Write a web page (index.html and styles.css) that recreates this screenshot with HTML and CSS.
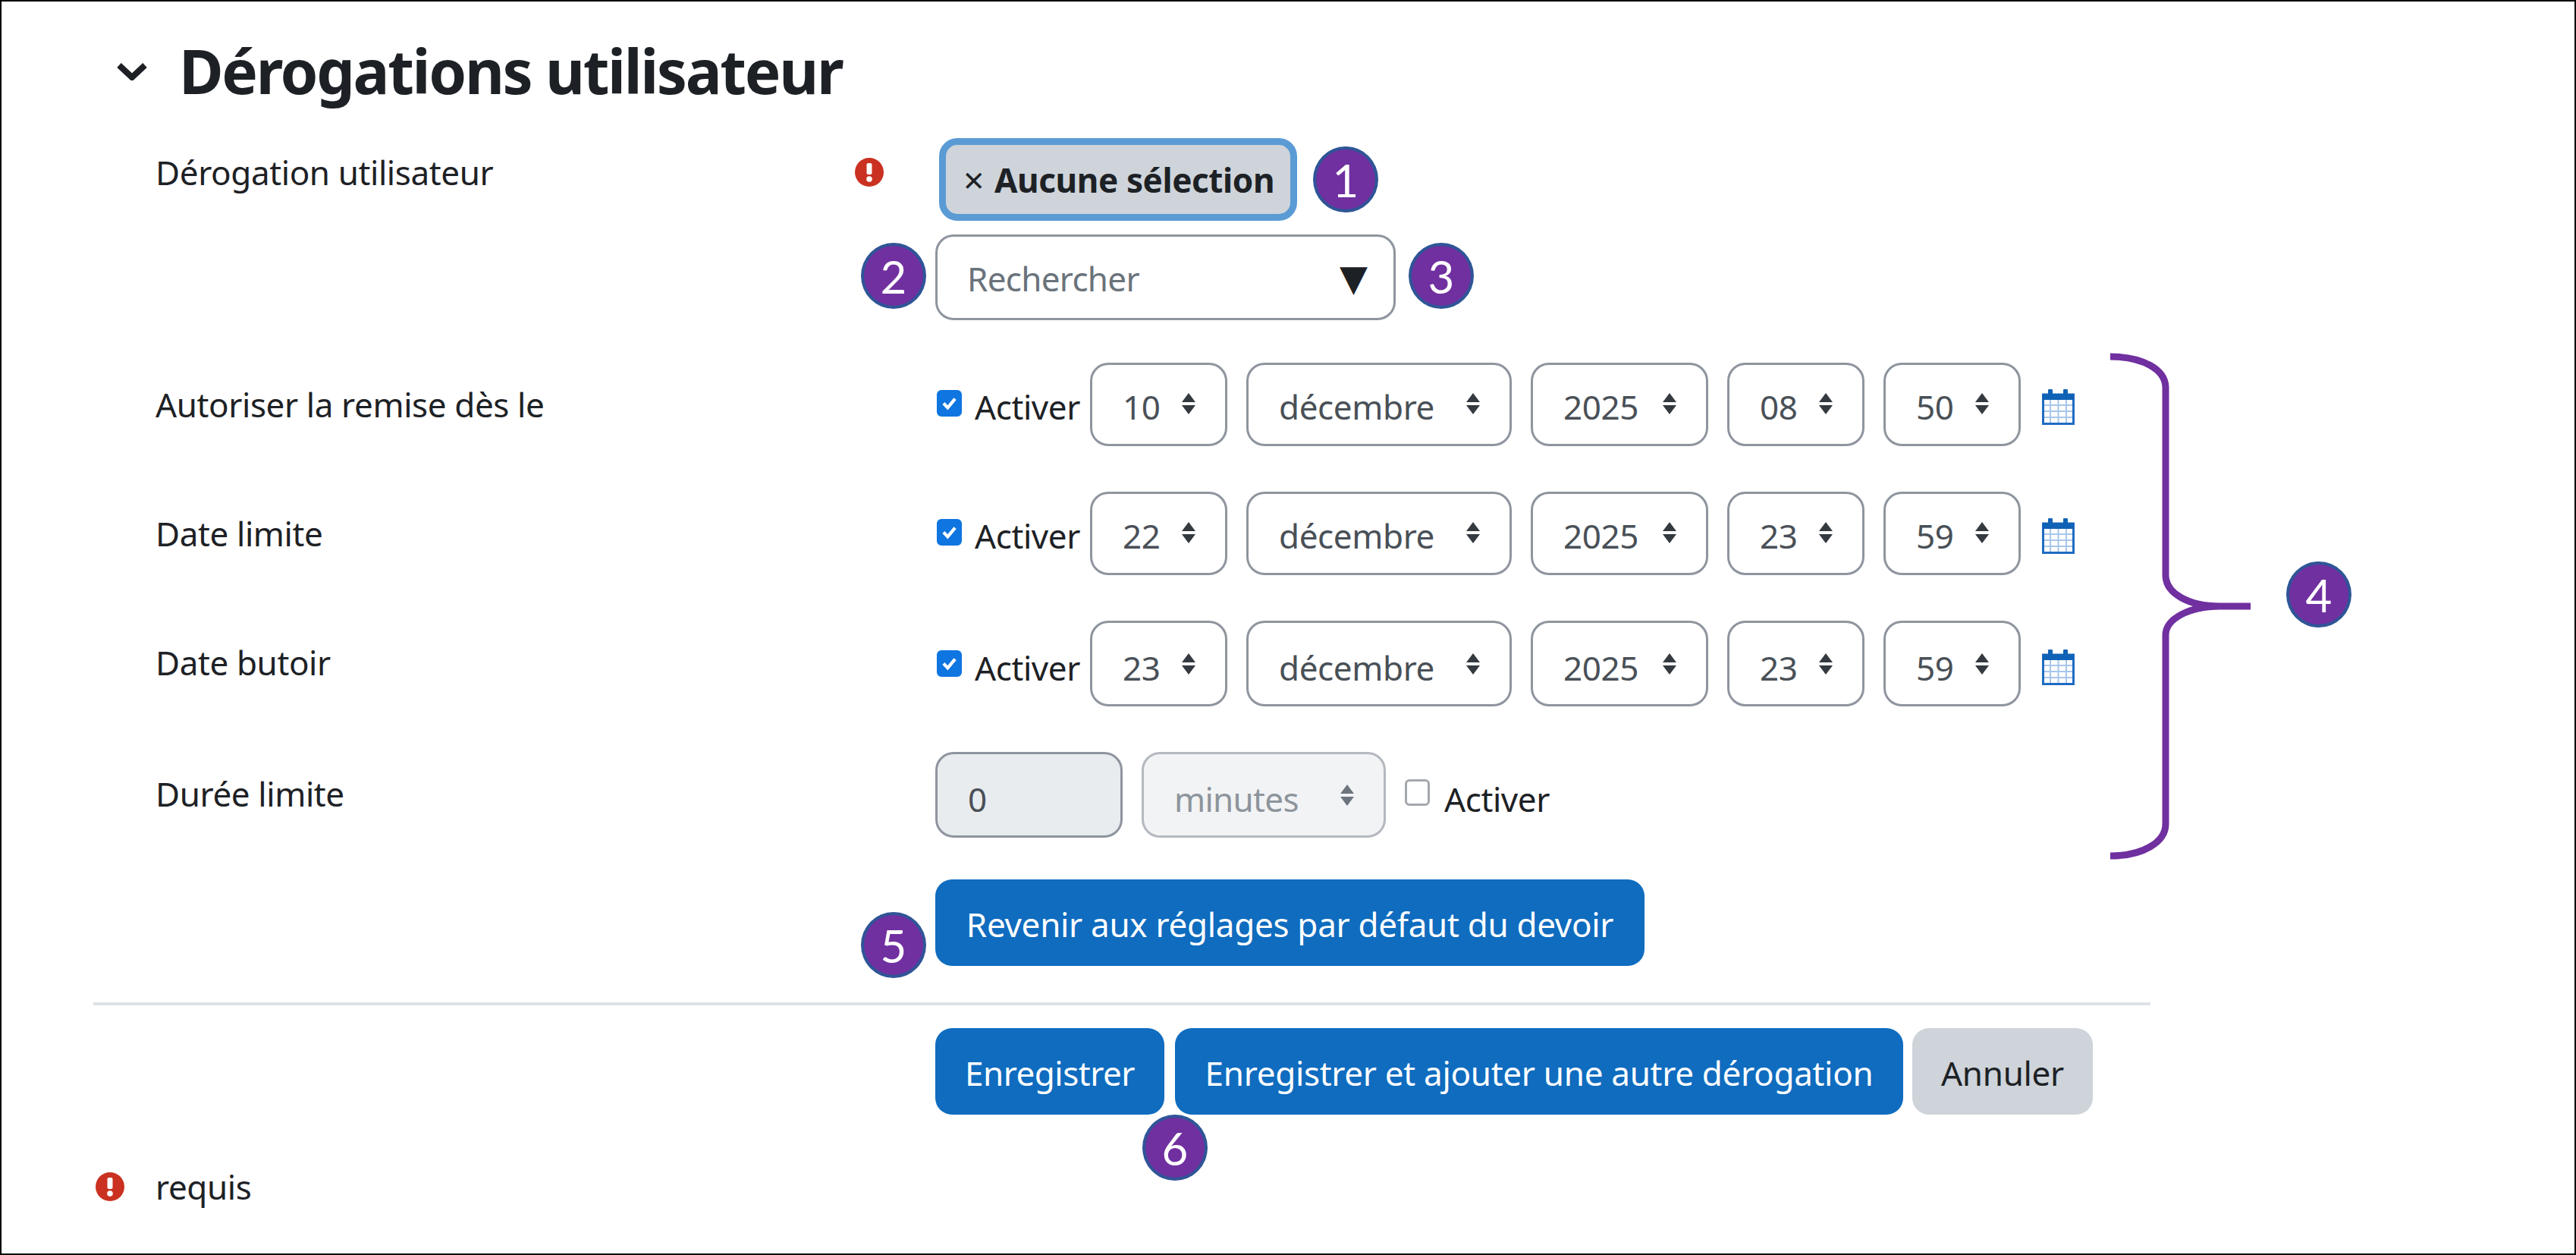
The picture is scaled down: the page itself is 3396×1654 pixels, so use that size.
FILE: index.html
```html
<!DOCTYPE html>
<html lang="fr">
<head>
  <meta charset="UTF-8" />
  <title>Dérogations utilisateur</title>
  <link rel="stylesheet" href="styles.css">
</head>
<body>
  <svg class="icon-defs" width="0" height="0">
    <symbol id="updown" viewBox="0 0 20 28">
      <path d="M10 0 L19 12 H1 Z M10 28 L1 16 H19 Z" />
    </symbol>
    <symbol id="warn" viewBox="0 0 38 38">
      <circle cx="19" cy="19" r="19" fill="#ca3120" />
      <rect x="15.5" y="7" width="7" height="15" rx="2" fill="#fff" />
      <circle cx="19" cy="28" r="3.8" fill="#fff" />
    </symbol>
    <symbol id="calendar" viewBox="0 0 43 47">
      <path d="M1 12 H42 M1 21 H42 M1 29 H42 M1 37 H42 M11 12 V46 M21.500 12 V46 M32 12 V46" stroke="#a8c6ea" stroke-width="2" fill="none" />
      <rect x="1.500" y="7" width="40" height="38.500" fill="none" stroke="#1f6cc2" stroke-width="3" />
      <rect x="1" y="6" width="41" height="8" fill="#0f62b5" />
      <path d="M11 8 V2 M31 8 V2" stroke="#0f62b5" stroke-width="6" stroke-linecap="round" />
    </symbol>
  </svg>

  <div class="frame">
    <div class="section-head">
      <svg class="chevron" viewBox="0 0 42 24"><path d="M4 4 L21 20 L38 4" fill="none" stroke="#1d2125" stroke-width="8" /></svg>
      <h2>Dérogations utilisateur</h2>
    </div>

    <div class="field field-user">
      <div class="label"><span>Dérogation utilisateur</span><svg class="warn"><use href="#warn" /></svg></div>
      <div class="picker">
        <div class="chip"><span class="chip-x">×</span><b>Aucune sélection</b></div>
        <div class="search"><span class="placeholder">Rechercher</span><span class="caret">▼</span></div>
      </div>
    </div>

    <div class="field">
      <div class="label"><span>Autoriser la remise dès le</span></div>
      <div class="controls">
        <span class="check checked"><svg viewBox="0 0 32 34"><path d="M7 17 L13.500 24 L25 10" fill="none" stroke="#fff" stroke-width="5" /></svg></span>
        <span class="check-text">Activer</span>
        <div class="sel sel-small"><span>10</span><svg class="arrows"><use href="#updown" /></svg></div>
        <div class="sel sel-month"><span>décembre</span><svg class="arrows"><use href="#updown" /></svg></div>
        <div class="sel sel-year"><span>2025</span><svg class="arrows"><use href="#updown" /></svg></div>
        <div class="sel sel-small"><span>08</span><svg class="arrows"><use href="#updown" /></svg></div>
        <div class="sel sel-small"><span>50</span><svg class="arrows"><use href="#updown" /></svg></div>
        <svg class="cal"><use href="#calendar" /></svg>
      </div>
    </div>

    <div class="field">
      <div class="label"><span>Date limite</span></div>
      <div class="controls">
        <span class="check checked"><svg viewBox="0 0 32 34"><path d="M7 17 L13.500 24 L25 10" fill="none" stroke="#fff" stroke-width="5" /></svg></span>
        <span class="check-text">Activer</span>
        <div class="sel sel-small"><span>22</span><svg class="arrows"><use href="#updown" /></svg></div>
        <div class="sel sel-month"><span>décembre</span><svg class="arrows"><use href="#updown" /></svg></div>
        <div class="sel sel-year"><span>2025</span><svg class="arrows"><use href="#updown" /></svg></div>
        <div class="sel sel-small"><span>23</span><svg class="arrows"><use href="#updown" /></svg></div>
        <div class="sel sel-small"><span>59</span><svg class="arrows"><use href="#updown" /></svg></div>
        <svg class="cal"><use href="#calendar" /></svg>
      </div>
    </div>

    <div class="field field-tall">
      <div class="label"><span>Date butoir</span></div>
      <div class="controls">
        <span class="check checked"><svg viewBox="0 0 32 34"><path d="M7 17 L13.500 24 L25 10" fill="none" stroke="#fff" stroke-width="5" /></svg></span>
        <span class="check-text">Activer</span>
        <div class="sel sel-small"><span>23</span><svg class="arrows"><use href="#updown" /></svg></div>
        <div class="sel sel-month"><span>décembre</span><svg class="arrows"><use href="#updown" /></svg></div>
        <div class="sel sel-year"><span>2025</span><svg class="arrows"><use href="#updown" /></svg></div>
        <div class="sel sel-small"><span>23</span><svg class="arrows"><use href="#updown" /></svg></div>
        <div class="sel sel-small"><span>59</span><svg class="arrows"><use href="#updown" /></svg></div>
        <svg class="cal"><use href="#calendar" /></svg>
      </div>
    </div>

    <div class="field field-tall field-limit">
      <div class="label"><span>Durée limite</span></div>
      <div class="controls">
        <div class="num-input"><span>0</span></div>
        <div class="sel sel-unit"><span>minutes</span><svg class="arrows"><use href="#updown" /></svg></div>
        <span class="check"></span>
        <span class="check-text">Activer</span>
      </div>
    </div>

    <div class="reset-row">
      <button class="btn btn-reset">Revenir aux réglages par défaut du devoir</button>
    </div>

    <hr class="divider">

    <div class="actions">
      <button class="btn btn-save">Enregistrer</button>
      <button class="btn btn-next">Enregistrer et ajouter une autre dérogation</button>
      <button class="btn btn-cancel">Annuler</button>
    </div>

    <div class="legend"><svg class="warn"><use href="#warn" /></svg><span>requis</span></div>

    <!-- callouts drawn over the form -->
    <div class="mark mark-1">1</div>
    <div class="mark mark-2">2</div>
    <div class="mark mark-3">3</div>
    <div class="mark mark-4">4</div>
    <div class="mark mark-5">5</div>
    <div class="mark mark-6">6</div>
    <svg class="brace" viewBox="2775 462 200 675">
      <path d="M2782 470 C2825 470 2855 487 2855 511 V758 C2855 782 2885 799 2927 799 H2967 M2927 799 C2885 799 2855 816 2855 837 V1086 C2855 1110 2825 1128 2782 1128" fill="none" stroke="#7030a0" stroke-width="9" />
    </svg>
  </div>
</body>
</html>
```

FILE: styles.css
```css
html, body { margin: 0; padding: 0; background: #fff; }
body {
  font-family: "Noto Sans", "Open Sans", sans-serif;
  font-size: 44px;
  letter-spacing: -0.4px;
  color: #1d2125;
}
.icon-defs { position: absolute; }

.frame {
  position: relative;
  box-sizing: border-box;
  width: 3396px; height: 1654px;
  border: 2px solid #000;
  overflow: hidden;
}

/* heading */
.section-head {
  display: flex; align-items: center;
  height: 94px;
  margin: 44px 0 42px;
  padding-left: 151px;
}
.chevron { width: 42px; height: 24px; margin-right: 41px; margin-top: 2px; }
h2 {
  margin: 0;
  font-size: 80px; font-weight: 700; line-height: 94px;
  letter-spacing: -2.3px;
}

/* form rows */
.field {
  display: grid;
  grid-template-columns: 1028px 1fr;
  height: 110px;
  padding-left: 203px;
  margin-bottom: 60px;
}
.field-tall { height: 113px; }
.field-limit { margin-bottom: 55px; }
.field-user { height: 240px; margin-bottom: 56px; }

.label {
  display: flex; align-items: center; justify-content: space-between;
  padding-right: 68px;
  height: 110px;
}
.field-user .label { height: 90px; }
.warn { width: 38px; height: 38px; flex: none; }

.picker { display: flex; flex-direction: column; align-items: flex-start; }
.chip {
  display: flex; align-items: center; gap: 14px;
  box-sizing: border-box;
  width: 472px; height: 109px;
  margin-left: 5px; margin-bottom: 18px;
  padding-left: 23px;
  background: #ced4da;
  border: 9px solid #5b9bd5;
  border-radius: 24px;
}
.chip-x { font-size: 48px; }
.chip b { font-weight: 700; font-size: 44px; }
.search {
  display: flex; align-items: center; justify-content: space-between;
  box-sizing: border-box;
  width: 607px; height: 113px;
  padding: 0 32px 0 39px;
  border: 3px solid #8f959e;
  border-radius: 24px;
}
.placeholder { color: #6a737b; letter-spacing: -0.7px; margin-top: 2px; }
.caret { font-family: "DejaVu Sans", sans-serif; font-size: 48px; letter-spacing: 0; color: #1d2125; margin-right: 2px; }

.controls { display: flex; align-items: center; gap: 25px; }
.check {
  box-sizing: border-box;
  width: 33px; height: 35px;
  margin-left: 2px; margin-right: -8px; margin-bottom: 4px;
  border: 3px solid #a4a8ad;
  border-radius: 6px;
  background: #fff;
}
.check.checked { background: #0f75e0; border-color: #0f75e0; }
.check svg { display: block; width: 100%; height: 100%; }
.check-text { margin-right: -12px; margin-top: 6px; }

.sel, .num-input {
  box-sizing: border-box;
  display: flex; align-items: center;
  height: 100%;
  padding-left: 40px;
  border: 3px solid #8f959e;
  border-radius: 24px;
  color: #495057;
}
.sel span, .num-input span { margin-top: 6px; }
.sel { justify-content: space-between; padding-right: 38px; }
.sel-small { width: 181px; }
.sel-month { width: 350px; }
.sel-year { width: 234px; }
.arrows { width: 20px; height: 28px; fill: #343a40; margin-bottom: 3px; flex: none; }
.cal { width: 43px; height: 47px; margin-left: 3px; margin-top: 7px; }

.field-tall .sel span, .field-tall .num-input span, .field-tall .check-text { margin-top: 10px; }
.field-tall .arrows { margin-bottom: 0; }
.field-tall .check { margin-bottom: 0; }
.field-tall .cal { margin-top: 9px; }

.num-input { width: 247px; background: #e9ecef; }
.sel-unit {
  width: 322px;
  background: #f2f3f5;
  border-color: #b4b9bf;
  color: #8d949b;
  letter-spacing: -0.7px;
}
.sel-unit .arrows { fill: #6c757d; }
.field-limit .check { margin-left: 0; margin-bottom: 6px; }
.field-limit .check-text { margin-left: 2px; }

/* buttons */
.btn {
  box-sizing: border-box;
  height: 114px;
  padding: 3px 0 0;
  border: none;
  border-radius: 22px;
  background: #0f6cbf;
  color: #fff;
  font: inherit;
  letter-spacing: -0.3px;
}
.reset-row { padding-left: 1231px; }
.divider {
  height: 4px;
  margin: 48px 559px 30px 121px;
  border: none;
  background: #dee2e6;
}
.actions { display: flex; padding-left: 1231px; }
.btn-reset { width: 935px; }
.btn-save { width: 302px; margin-right: 14px; letter-spacing: -0.5px; }
.btn-next { width: 960px; margin-right: 12px; }
.btn-cancel { width: 238px; background: #ced4da; color: #1d2125; }

.legend {
  display: flex; align-items: center; gap: 41px;
  margin-top: 75px;
  padding-left: 124px;
  height: 39px;
}

/* numbered callouts */
.mark {
  position: absolute;
  box-sizing: border-box;
  display: flex; align-items: center; justify-content: center;
  width: 86px; height: 87px;
  border: 4px solid #2f5597;
  border-radius: 50%;
  background: #7030a0;
  color: #fff;
  font-family: Lato, sans-serif;
  font-size: 60px;
  letter-spacing: 0;
}
.mark-1 { left: 1729px; top: 191px; }
.mark-2 { left: 1133px; top: 318px; }
.mark-3 { left: 1855px; top: 318px; }
.mark-4 { left: 3012px; top: 738px; }
.mark-5 { left: 1133px; top: 1200px; }
.mark-6 { left: 1504px; top: 1467px; }
.brace { position: absolute; left: 2773px; top: 460px; width: 200px; height: 675px; }
```
